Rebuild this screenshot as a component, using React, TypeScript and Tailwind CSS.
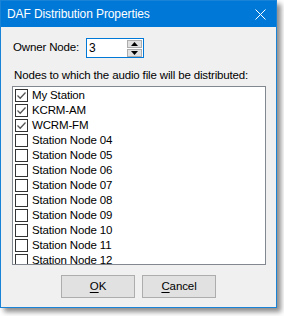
const nodes = [
  { name: "My Station", checked: true },
  { name: "KCRM-AM", checked: true },
  { name: "WCRM-FM", checked: true },
  { name: "Station Node 04", checked: false },
  { name: "Station Node 05", checked: false },
  { name: "Station Node 06", checked: false },
  { name: "Station Node 07", checked: false },
  { name: "Station Node 08", checked: false },
  { name: "Station Node 09", checked: false },
  { name: "Station Node 10", checked: false },
  { name: "Station Node 11", checked: false },
  { name: "Station Node 12", checked: false },
];

function CheckBox({ checked }: { checked: boolean }) {
  return (
    <div className="w-[13px] h-[13px] border border-[#333333] bg-white shrink-0 flex items-center justify-center">
      {checked && (
        <svg width="11" height="11" viewBox="0 0 11 11">
          <path d="M1.5 5.5 L4.2 8.2 L9.5 2.5" fill="none" stroke="#555" strokeWidth="1.3" />
        </svg>
      )}
    </div>
  );
}

function Button({ label, mnemonic }: { label: string; mnemonic: string }) {
  return (
    <button className="w-[74px] h-[23px] bg-[#e1e1e1] border border-[#adadad] text-[11.5px] tracking-[-0.1px] text-black">
      <span className="underline underline-offset-2">{mnemonic}</span>
      {label.slice(1)}
    </button>
  );
}

export default function App() {
  return (
    <div
      className="w-[284px] h-[316px] bg-white"
      style={{ fontFamily: '"Liberation Sans", Arial, sans-serif' }}
    >
      <div className="w-[277px] h-[308px] border border-[#1883d7] bg-[#f0f0f0] flex flex-col shadow-[4px_4px_5px_rgba(0,0,0,0.45)]">
        <div className="h-[26px] bg-[#0078d7] flex items-center pl-[6px] pr-[10px] text-white text-[12px] tracking-[-0.1px] whitespace-nowrap">
          <span className="flex-1">DAF Distribution Properties</span>
          <svg width="11" height="11" viewBox="0 0 11 11">
            <path d="M0.5 0.5 L10.5 10.5 M10.5 0.5 L0.5 10.5" stroke="white" strokeWidth="1" />
          </svg>
        </div>
        <div className="flex-1 flex flex-col px-[11px] text-[11.5px] tracking-[-0.15px] text-black whitespace-nowrap">
          <div className="flex items-center mt-[11px] h-[20px]">
            <span className="pl-[1px] w-[74px]">Owner Node:</span>
            <div className="w-[58px] h-[20px] border border-[#0078d7] bg-white flex items-center">
              <span className="flex-1 pl-[2px] text-[12px]">3</span>
              <div className="flex flex-col gap-[1px] pr-[1px]">
                <div className="w-[15px] h-[8px] bg-[#e1e1e1] border border-[#adadad] flex items-center justify-center">
                  <svg width="7" height="4" viewBox="0 0 7 4"><path d="M3.5 0 L7 4 L0 4 Z" fill="black" /></svg>
                </div>
                <div className="w-[15px] h-[8px] bg-[#e1e1e1] border border-[#adadad] flex items-center justify-center">
                  <svg width="7" height="4" viewBox="0 0 7 4"><path d="M0 0 L7 0 L3.5 4 Z" fill="black" /></svg>
                </div>
              </div>
            </div>
          </div>
          <div className="mt-[9px] h-[16px] pl-[2px] leading-[16px]">
            Nodes to which the audio file will be distributed:
          </div>
          <div className="mt-[3px] w-[254px] h-[179px] border border-[#828790] bg-white overflow-hidden pt-[1px] pl-[2px]">
            {nodes.map((n) => (
              <div key={n.name} className="h-[15px] flex items-center gap-[4px]">
                <CheckBox checked={n.checked} />
                <span className="leading-[15px] text-[11.5px]">{n.name}</span>
              </div>
            ))}
          </div>
          <div className="flex justify-center gap-[7px] mt-[10px]">
            <Button label="OK" mnemonic="O" />
            <Button label="Cancel" mnemonic="C" />
          </div>
        </div>
      </div>
    </div>
  );
}
